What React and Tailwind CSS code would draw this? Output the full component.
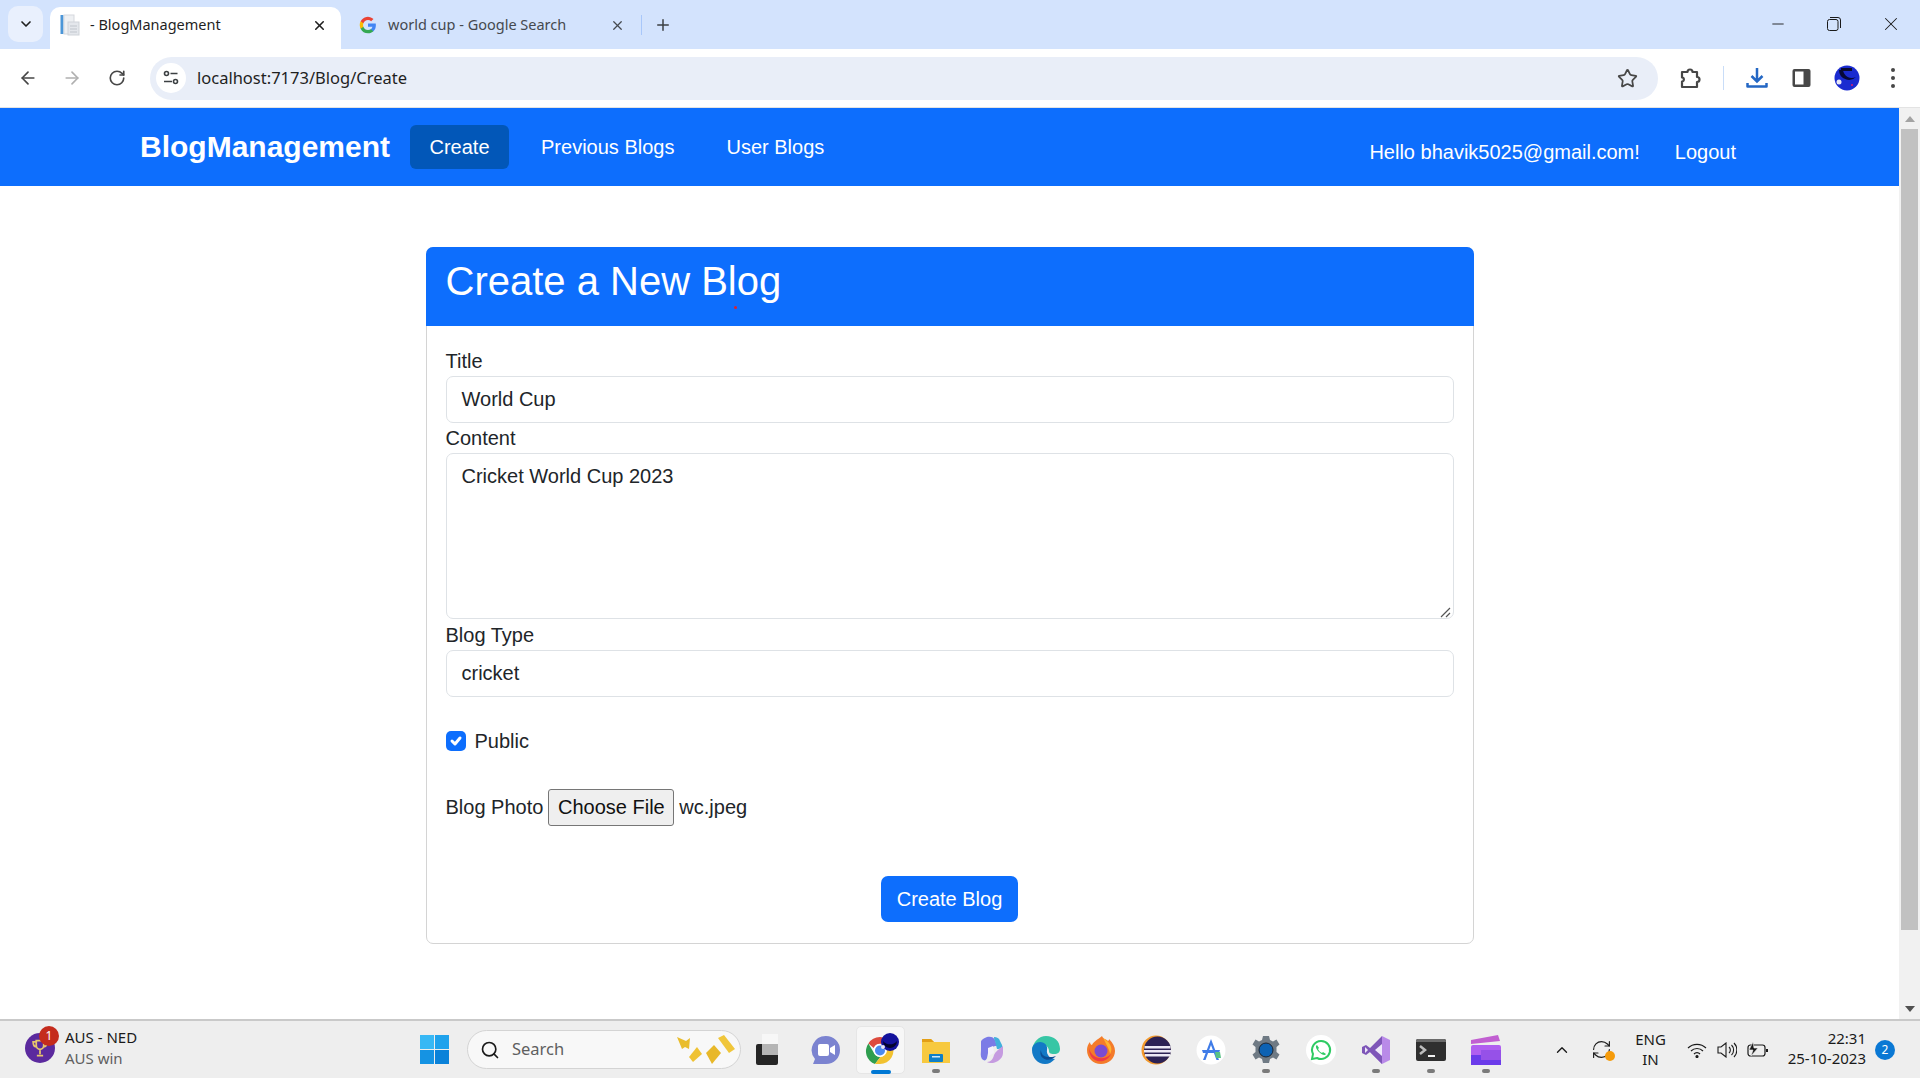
import React from "react";
import { ArrowLeft, ArrowRight, RotateCw, RefreshCw, Star, Search, ChevronDown, ChevronUp, X, Plus, Minus } from "lucide-react";

const ui = { fontFamily: '"Noto Sans", "Open Sans", sans-serif' };
const web = { fontFamily: '"Liberation Sans", Arial, sans-serif' };

function GoogleG() {
  return (
    <svg viewBox="0 0 24 24" className="w-[18px] h-[18px]">
      <path fill="#4285F4" d="M22.5 12.3c0-.8-.1-1.600-.2-2.300H12v4.400h5.900a5 5 0 0 1-2.200 3.300v2.700h3.500c2.100-1.900 3.300-4.800 3.300-8.100z" />
      <path fill="#34A853" d="M12 23c3 0 5.400-1 7.200-2.700l-3.500-2.700c-1 .7-2.200 1.100-3.700 1.100-2.900 0-5.300-1.900-6.200-4.500H2.200v2.800A11 11 0 0 0 12 23z" />
      <path fill="#FBBC05" d="M5.800 14.200a6.600 6.600 0 0 1 0-4.300V7H2.200a11 11 0 0 0 0 9.900z" />
      <path fill="#EA4335" d="M12 5.400c1.600 0 3 .6 4.200 1.600l3.100-3.100A11 11 0 0 0 2.200 7l3.600 2.800C6.700 7.300 9.100 5.400 12 5.400z" />
    </svg>
  );
}

function PageFav() {
  return (
    <svg viewBox="0 0 20 22" className="w-[20px] h-[22px]">
      <rect x="0.500" y="1" width="3" height="19" fill="#4b96d8" />
      <rect x="4" y="1" width="10" height="19" fill="#eef0f3" stroke="#d5d8dd" />
      <rect x="8" y="8" width="11" height="13" fill="#e4e7ec" stroke="#cfd3d9" />
      <path d="M10 12h7M10 15h7M10 18h7" stroke="#c0c5cc" />
    </svg>
  );
}

function Tune() {
  return (
    <svg viewBox="0 0 16 16" className="w-[16px] h-[16px]" fill="none" stroke="#3c4043" strokeWidth="1.600">
      <circle cx="3.500" cy="3.500" r="2" />
      <path d="M7.500 3.500h7M1 11.500h8" />
      <circle cx="12.500" cy="11.500" r="2" />
    </svg>
  );
}

function Puzzle() {
  return (
    <svg viewBox="0 0 24 24" className="w-[24px] h-[24px]" fill="none" stroke="#474747" strokeWidth="2.200" strokeLinejoin="round">
      <path d="M4 6h5.500a2.500 2.500 0 0 1 5 0H19v5a2.500 2.500 0 0 1 0 5v5H4v-5.500c2.500 0 2.500-4 0-4z" />
    </svg>
  );
}

function Download() {
  return (
    <svg viewBox="0 0 24 24" className="w-[24px] h-[24px]" fill="none" stroke="#2467c4" strokeWidth="2.500">
      <path d="M12 2v13M6.500 10l5.500 5.500L17.500 10" />
      <path d="M2.500 17v3.500h19V17" strokeLinejoin="round" />
    </svg>
  );
}

function SidePanel() {
  return (
    <svg viewBox="0 0 20 20" className="w-[20px] h-[20px]">
      <rect x="0.500" y="1" width="18" height="18" rx="2" fill="#474747" />
      <rect x="3" y="3.500" width="8.500" height="13" fill="#fff" />
    </svg>
  );
}

function Avatar() {
  return (
    <svg viewBox="0 0 26 26" className="w-[26px] h-[26px]">
      <circle cx="13" cy="13" r="12.500" fill="#1a2bd0" />
      <path d="M5 5a10 10 0 0 0 17 7 9 9 0 0 1-13-7z" fill="#06083a" />
      <circle cx="5" cy="17" r="2.500" fill="#e8e8f5" />
      <circle cx="18" cy="20" r="1" fill="#e01f70" />
      <path d="M7 3h11v3H7z" fill="#0a0a30" />
    </svg>
  );
}

function Restore() {
  return (
    <svg viewBox="0 0 14 14" className="w-[14px] h-[14px]" fill="none" stroke="#1a1a1a" strokeWidth="1">
      <rect x="0.500" y="2.500" width="10.500" height="11" rx="2" />
      <path d="M3 .5h8a2.500 2.500 0 0 1 2.500 2.500v8" />
    </svg>
  );
}

function TabStrip() {
  return (
    <div className="h-[49px] shrink-0 bg-[#d3e3fd] flex items-start relative" style={ui}>
      <div className="ml-[8px] mt-[6px] w-[35px] h-[36px] rounded-[10px] bg-[#e9f0fd] flex items-center justify-center">
        <ChevronDown size={16} strokeWidth={2.500} color="#1f1f1f" />
      </div>
      <div className="ml-[7px] mt-[7px] w-[291px] h-[42px] bg-white rounded-t-[10px] flex items-center pl-[10px] pr-[14px] pb-[6px]">
        <PageFav />
        <span className="ml-[10px] text-[14.500px] text-[#1f1f1f] flex-1">- BlogManagement</span>
        <X size={15} strokeWidth={2.500} color="#1f1f1f" />
      </div>
      <div className="mt-[7px] h-[42px] flex items-center ml-[18px] pb-[6px]">
        <GoogleG />
        <span className="ml-[11px] text-[14.500px] text-[#45494f] w-[222px]">world cup - Google Search</span>
        <X size={15} strokeWidth={2} color="#45494f" />
        <div className="ml-[16px] w-px h-[20px] bg-[#a8c7fa]" />
        <Plus size={18} strokeWidth={2} color="#3c4043" className="ml-[12px]" />
      </div>
      <div className="ml-auto h-[49px] flex">
        <div className="w-[56px] flex justify-center pt-[15px]">
          <Minus size={18} strokeWidth={1.200} color="#1a1a1a" />
        </div>
        <div className="w-[56px] flex justify-center pt-[17px]">
          <Restore />
        </div>
        <div className="w-[58px] flex justify-center pt-[13px]">
          <X size={22} strokeWidth={1.100} color="#1a1a1a" />
        </div>
      </div>
    </div>
  );
}

function Toolbar() {
  return (
    <div className="h-[59px] shrink-0 bg-white border-b border-[#e3e3e3] rounded-t-[8px] flex items-center relative z-10" style={ui}>
      <ArrowLeft size={20} strokeWidth={2} color="#474747" className="ml-[18px]" />
      <ArrowRight size={20} strokeWidth={2} color="#b0b0b0" className="ml-[24px]" />
      <RotateCw size={18} strokeWidth={2.200} color="#474747" className="ml-[26px]" />
      <div className="ml-[24px] w-[1508px] h-[43px] rounded-full bg-[#e9eef8] flex items-center pl-[6px]">
        <div className="w-[30px] h-[30px] rounded-full bg-white flex items-center justify-center">
          <Tune />
        </div>
        <span className="ml-[11px] text-[16.500px] text-[#1f1f1f]">localhost:7173/Blog/Create</span>
        <Star size={21} strokeWidth={2} color="#474747" className="ml-auto mr-[20px]" />
      </div>
      <div className="ml-[20px]"><Puzzle /></div>
      <div className="ml-[21px] w-px h-[24px] bg-[#c9ddf8]" />
      <div className="ml-[21px]"><Download /></div>
      <div className="ml-[23px]"><SidePanel /></div>
      <div className="ml-[22px]"><Avatar /></div>
      <div className="ml-[31px] flex flex-col gap-[4px]">
        <span className="w-[4px] h-[4px] rounded-full bg-[#474747]" />
        <span className="w-[4px] h-[4px] rounded-full bg-[#474747]" />
        <span className="w-[4px] h-[4px] rounded-full bg-[#474747]" />
      </div>
    </div>
  );
}

function Nav() {
  return (
    <nav className="h-[78px] shrink-0 bg-[#0d6efd] text-white flex items-center pl-[140px] text-[20px]">
      <span className="text-[30px] font-bold leading-none">BlogManagement</span>
      <span className="ml-[20px] w-[99px] h-[44px] rounded-[6px] bg-[#0257b8] flex items-center justify-center">Create</span>
      <span className="ml-[32px]">Previous Blogs</span>
      <span className="ml-[52px]">User Blogs</span>
      <div className="ml-auto mr-[163px] flex gap-[35px] pt-[10px]">
        <span>Hello bhavik5025@gmail.com!</span>
        <span>Logout</span>
      </div>
    </nav>
  );
}

function Field({ label, value }) {
  return (
    <>
      <div className="h-[30px] leading-[30px]">{label}</div>
      <div className="h-[47px] rounded-[7px] border border-[#dee2e6] flex items-center px-[15px] pb-[1px]">{value}</div>
    </>
  );
}

function Card() {
  return (
    <div className="w-[1048px] mx-auto mt-[61px] rounded-[7px] border border-[#d4d4d4] relative text-[20px] text-[#212529]">
      <div className="h-[79px] -mx-px -mt-px rounded-t-[7px] bg-[#0d6efd] text-white text-[40px] flex items-center px-[20px] pb-[12px]">
        Create a New Blog
      </div>
      <div className="px-[19px] pt-[20px] pb-[21px]">
        <Field label="Title" value="World Cup" />
        <div className="h-[30px] leading-[30px]">Content</div>
        <div className="h-[166px] rounded-[7px] border border-[#dee2e6] px-[15px] pt-[7px] relative">
          Cricket World Cup 2023
          <svg viewBox="0 0 12 12" className="absolute right-[2px] bottom-0 w-[12px] h-[12px]" stroke="#555" strokeWidth="1.200">
            <path d="M2 11 11 2M7 11l4-4" />
          </svg>
        </div>
        <div className="h-[31px] leading-[32px]">Blog Type</div>
        <div className="h-[47px] rounded-[7px] border border-[#dee2e6] flex items-center px-[15px] pb-[1px]">cricket</div>
        <div className="mt-[32px] h-[24px] flex items-center">
          <span className="w-[20px] h-[20px] rounded-[5px] bg-[#0d6efd] flex items-center justify-center">
            <svg viewBox="0 0 20 20" className="w-[20px] h-[20px]" fill="none" stroke="#fff" strokeWidth="3" strokeLinecap="round" strokeLinejoin="round">
              <path d="m6 10 3 3 5-6" />
            </svg>
          </span>
          <span className="ml-[9px]">Public</span>
        </div>
        <div className="mt-[36px] h-[36px] flex items-center">
          <span>Blog Photo</span>
          <span className="ml-[5px] w-[126px] h-[37px] rounded-[3px] border border-[#767676] bg-[#efefef] flex items-center justify-center text-[#111]">Choose File</span>
          <span className="ml-[5px]">wc.jpeg</span>
        </div>
        <div className="mt-[51px] flex justify-center">
          <span className="w-[137px] h-[46px] rounded-[7px] bg-[#0d6efd] text-white flex items-center justify-center">Create Blog</span>
        </div>
      </div>
      <div className="absolute left-[307px] top-[58px] w-[3px] h-[3px] rounded-full bg-[#e0202a]" />
    </div>
  );
}

function Scrollbar() {
  return (
    <div className="w-[21px] shrink-0 bg-[#f1f1f1] flex flex-col items-center">
      <div className="h-[21px] flex items-center justify-center">
        <svg viewBox="0 0 10 6" className="w-[10px] h-[6px]"><path d="M5 0l5 6H0z" fill="#a3a3a3" /></svg>
      </div>
      <div className="w-[17px] h-[801px] bg-[#c1c1c1]" />
      <div className="flex-1" />
      <div className="h-[21px] flex items-center justify-center">
        <svg viewBox="0 0 10 6" className="w-[10px] h-[6px]"><path d="M5 6 10 0H0z" fill="#505050" /></svg>
      </div>
    </div>
  );
}

function Slot({ children, active, dot }) {
  return (
    <div className="w-[55px] h-[48px] relative flex items-center justify-center shrink-0">
      {active && <span className="absolute inset-y-0 left-[3px] right-[3px] rounded-[5px] bg-[#f7f7f7] border border-[#e6e6e6]" />}
      <span className="relative flex">{children}</span>
      {dot && <span className="absolute bottom-[1px] left-1/2 -translate-x-1/2 w-[8px] h-[4px] rounded-full bg-[#7a7a7a]" />}
      {active && <span className="absolute bottom-[0px] left-1/2 -translate-x-1/2 w-[20px] h-[4px] rounded-full bg-[#0078d4]" />}
    </div>
  );
}

const Ic = ({ children, vb = "0 0 30 30", s = 30 }) => (
  <svg viewBox={vb} style={{ width: s, height: s }}>{children}</svg>
);

function Taskbar() {
  return (
    <div className="h-[59px] shrink-0 bg-[#eeeeee] border-t-2 border-[#c9c9c9] flex items-center relative" style={ui}>
      <div className="absolute left-[25px] top-[12px] w-[30px] h-[30px] rounded-full bg-[#5b2a9e] flex items-center justify-center">
        <svg viewBox="0 0 16 16" className="w-[20px] h-[20px]" fill="none" stroke="#e7c66c" strokeWidth="1.400">
          <path d="M5 2h6v4a3 3 0 0 1-6 0zM8 9v4M5.500 14h5M5 3H2.500c0 3 1 4 2.500 4M11 3h2.500c0 3-1 4-2.500 4" />
        </svg>
      </div>
      <div className="absolute left-[39px] top-[5px] w-[20px] h-[20px] rounded-full bg-[#c42b1c] text-white text-[12px] flex items-center justify-center">1</div>
      <div className="absolute left-[65px] top-[6px] text-[15px] leading-[21px] text-[#1a1a1a]">
        <div>AUS - NED</div>
        <div className="text-[#5f5f5f]">AUS win</div>
      </div>
      <div className="ml-[420px] w-[29px] h-[29px] grid grid-cols-2 grid-rows-2 gap-[1px]">
        <span className="bg-[#37b8f5]" />
        <span className="bg-[#1fa2ec]" />
        <span className="bg-[#1593e3]" />
        <span className="bg-[#0a82d9]" />
      </div>
      <div className="ml-[18px] w-[274px] h-[39px] rounded-full bg-[#f8f8f8] border border-[#d4d4d4] flex items-center pl-[12px] relative">
        <Search size={20} strokeWidth={2} color="#1a1a1a" />
        <span className="ml-[12px] text-[16.500px] text-[#5f5f5f]">Search</span>
        <svg viewBox="0 0 60 30" className="absolute right-[4px] top-[4px] w-[60px] h-[30px]">
          <path d="M1 2l9 4 4-3-1 11-4-2-3 2z" fill="#e9bd2d" />
          <path d="M42 3l6-3 11 14-6 4z" fill="#f0c63a" />
          <path d="M30 18l8-8 7 8-9 11z" fill="#e8b829" />
          <path d="M13 22l8-10 5 7-9 8z" fill="#efc233" />
        </svg>
      </div>
      <div className="ml-[15px] w-[22px] h-[31px] relative shrink-0">
        <span className="absolute left-[0px] bottom-0 w-[22px] h-[21px] bg-[#252525] rounded-[2px]" />
        <span className="absolute left-[6px] top-0 w-[16px] h-[21px] bg-[#f7f7f7]" />
        <span className="absolute left-[6px] top-[10px] w-[16px] h-[11px] bg-[#b5b5b5]" />
      </div>
      <div className="ml-[20px] flex items-center">
        <Slot>
          <Ic>
            <path d="M15 1a14 14 0 0 1 14 14c0 8-6 14-14 14H2l2-5a14 14 0 0 1 11-23z" fill="#7b83d0" />
            <rect x="7" y="9" width="11" height="12" rx="2" fill="#fff" />
            <path d="M19 13l5-3v10l-5-3z" fill="#fff" />
          </Ic>
        </Slot>
        <Slot active>
          <svg viewBox="0 0 36 34" style={{ width: 36, height: 34 }}>
            <path d="M17 4a13.500 13.500 0 0 1 11.700 6.800H17a6.700 6.700 0 0 0-6.200 4.200L5.400 10.500A13.500 13.500 0 0 1 17 4z" fill="#dd4b3e" />
            <path d="M5.400 10.500 11 20a6.700 6.700 0 0 0 6.500 3.700L12 31A13.500 13.500 0 0 1 5.400 10.500z" fill="#2f9e4f" />
            <path d="M28.700 10.800A13.500 13.500 0 0 1 17 31h-5l5.500-7.300a6.700 6.700 0 0 0 5.300-10.500z" fill="#f2c230" />
            <circle cx="17" cy="17.500" r="6.500" fill="#fff" />
            <circle cx="17" cy="17.500" r="5" fill="#4a8af0" />
            <circle cx="27" cy="9" r="9" fill="#13129c" />
            <path d="M20 8a7 7 0 0 0 14 0 9 9 0 0 1-14 0z" fill="#04042e" />
            <circle cx="20" cy="14" r="2" fill="#e8e8f5" />
          </svg>
        </Slot>
        <Slot dot>
          <Ic>
            <path d="M1 4h9l3 3h16v21H1z" fill="#f7c93f" />
            <path d="M1 4h9l3 3H1z" fill="#e39f16" />
            <rect x="8" y="19" width="14" height="8" rx="1" fill="#0f7fc7" />
            <rect x="11" y="21" width="8" height="1.500" fill="#cde7f8" />
          </Ic>
        </Slot>
        <Slot>
          <Ic>
            <path d="M11 2c3-1 7 0 8 3l2 6c-5 0-8 2-9 7l-1 5c-1 3-3 3-5 1-2-3-1-6-1-9V7c0-2 3-4 6-5z" fill="#7b7be6" />
            <path d="M18 2c3 0 5 1 6 4l2 4c1 3-1 4-5 4l-2-8c-1-2-1-3-1-4z" fill="#42b0dc" />
            <path d="M27 11v7c0 3-2 6-5 8-3 2-8 3-11 1 4 0 6-3 7-7 1-3 5-6 9-9z" fill="#c59be0" />
            <path d="M12 13l5-2 1 7-6 3z" fill="#f4f1fb" />
          </Ic>
        </Slot>
        <Slot>
          <Ic>
            <path d="M15 1c8 0 14 5 14 13 0 3-2 5-6 5-4 0-5-1-5-3 0-4-4-7-8-7-4 0-8 3-9 6 1-8 7-14 14-14z" fill="#37c6a5" />
            <path d="M1 15c0-5 4-8 8-8 5 0 8 4 7 8-1 5 4 9 8 9-3 3-6 5-10 5C7 29 1 23 1 15z" fill="#1379c6" />
            <path d="M10 15c0 3 2 7 7 7 3 0 6 0 8-1-3 4-10 5-13 2-3-2-3-6-2-8z" fill="#0c4e95" />
          </Ic>
        </Slot>
        <Slot>
          <Ic>
            <path d="M16 1c1 3 4 3 6 5 1-1 1-1 1-2 4 4 6 8 6 12 0 7-6 13-14 13S1 23 1 15c0-3 1-6 3-8 0 2 1 3 2 3 1-3 5-5 10-9z" fill="#f47b2a" />
            <path d="M16 1c1 3 5 4 7 7 3 4 3 8 1 11-1-6-4-10-8-18z" fill="#ffb52e" />
            <circle cx="15" cy="16" r="6.500" fill="#7b4bd1" />
            <path d="M3 13c2 10 14 14 22 6-3 7-11 9-16 6-4-2-6-7-6-12z" fill="#ef3b46" />
          </Ic>
        </Slot>
        <Slot>
          <Ic>
            <circle cx="15" cy="15" r="14.500" fill="#f39a2d" />
            <circle cx="16.500" cy="15" r="13.500" fill="#2c2255" />
            <path d="M3.500 11h26v2.500h-26zM3 15h27v2.500H3zM4 19h25v2.500H4z" fill="#ece9f5" />
          </Ic>
        </Slot>
        <Slot>
          <Ic>
            <circle cx="15" cy="15" r="14.500" fill="#fff" />
            <path d="M15 4l8 21h-2.500L15 10 9.500 25H7z" fill="#3f7ce8" />
            <path d="M6 15h18l-1 3H7z" fill="#3f7ce8" />
            <path d="M19 17h5l1 6h-5z" fill="#58c184" />
          </Ic>
        </Slot>
        <Slot dot>
          <Ic>
            <path d="M12 1h6l1 4 3 1.500 3.500-2 3 5-3 2.500v5l3 2.500-3 5-3.500-2-3 1.500-1 4h-6l-1-4-3-1.500-3.500 2-3-5 3-2.500v-5l-3-2.500 3-5 3.500 2 3-1.500z" fill="#6f7a84" />
            <circle cx="15" cy="15" r="7" fill="#0d62b3" stroke="#1d2430" strokeWidth="1" />
          </Ic>
        </Slot>
        <Slot>
          <Ic>
            <circle cx="15" cy="15" r="15" fill="#fff" />
            <path d="M15 6a9 9 0 0 0-8 13l-1 5 5-1a9 9 0 1 0 4-17z" fill="none" stroke="#2ecb63" strokeWidth="2" />
            <path d="M11 10c-2 1-1 4 2 7s6 4 7 2l-3-2-1 1c-2-1-3-2-4-4l1-1z" fill="#2ecb63" />
          </Ic>
        </Slot>
        <Slot dot>
          <Ic>
            <path d="M21 1l8 4v20l-8 4-13-13 13-9z" fill="#b98ae8" />
            <path d="M21 1v28L9 17l-4 3-4-2V12l4-2 4 3z" fill="#7e56b8" />
            <path d="M21 9v12l-7-6z" fill="#eee8fa" />
            <path d="M4 12v6l3-3z" fill="#eee8fa" />
          </Ic>
        </Slot>
        <Slot dot>
          <Ic>
            <rect x="0" y="4" width="30" height="22" rx="2" fill="#2f2f2f" />
            <path d="M0 6a2 2 0 0 1 2-2h26a2 2 0 0 1 2 2v1H0z" fill="#6a6a6a" />
            <path d="M4 11l5 4-5 4" fill="none" stroke="#bdbdbd" strokeWidth="2.500" />
            <path d="M12 21h7" stroke="#f1f1f1" strokeWidth="2" />
          </Ic>
        </Slot>
        <Slot dot>
          <Ic>
            <path d="M0 5l27-5 2 6-29 3z" fill="#c15fd1" />
            <rect x="0" y="10" width="30" height="20" rx="2" fill="#b05ff0" />
            <rect x="0" y="20" width="30" height="10" fill="#6b3bea" />
            <rect x="10" y="15" width="20" height="10" fill="#9651e8" />
          </Ic>
        </Slot>
      </div>
      <div className="ml-auto flex items-center h-full text-[#1a1a1a]">
        <ChevronUp size={18} strokeWidth={1.800} color="#1a1a1a" />
        <div className="ml-[20px] w-[22px] h-[22px] relative">
          <RefreshCw size={21} strokeWidth={1.300} color="#1a1a1a" />
          <span className="absolute right-[-2px] bottom-[0px] w-[10px] h-[10px] rounded-full bg-[#f59b0b]" />
        </div>
        <div className="ml-[19px] w-[37px] text-center text-[15px] leading-[20px] pb-[2px]">
          <div>ENG</div>
          <div>IN</div>
        </div>
        <svg viewBox="0 0 20 16" className="ml-[18px] w-[20px] h-[16px]" fill="none" stroke="#1a1a1a" strokeWidth="1.200">
          <path d="M1 6a13 13 0 0 1 18 0M4 9a8.500 8.500 0 0 1 12 0M7 12a4 4 0 0 1 6 0" />
          <circle cx="10" cy="14.500" r="1" fill="#1a1a1a" />
        </svg>
        <svg viewBox="0 0 20 16" className="ml-[10px] w-[20px] h-[16px]" fill="none" stroke="#1a1a1a" strokeWidth="1.100">
          <path d="M1 5h3l5-4v14l-5-4H1zM12 5a4 4 0 0 1 0 6M14.500 3a7 7 0 0 1 0 10M17 1a10 10 0 0 1 0 14" />
        </svg>
        <svg viewBox="0 0 22 16" className="ml-[10px] w-[22px] h-[16px]" fill="none" stroke="#1a1a1a" strokeWidth="1.200">
          <rect x="1" y="3" width="17" height="11" rx="2.500" />
          <path d="M20 7v3" strokeWidth="2" />
          <path d="M6 0 2 8h4l-2 6 7-8H7z" fill="#1a1a1a" stroke="#eee" strokeWidth="0.600" />
        </svg>
        <div className="ml-[13px] w-[84px] text-right text-[15px] leading-[20px] pb-[4px]">
          <div>22:31</div>
          <div className="whitespace-nowrap">25-10-2023</div>
        </div>
        <div className="ml-[9px] mr-[25px] w-[20px] h-[20px] rounded-full bg-[#0a78d4] text-white text-[12px] flex items-center justify-center">2</div>
      </div>
    </div>
  );
}

export default function App() {
  return (
    <div className="h-screen w-full flex flex-col overflow-hidden bg-white" style={web}>
      <TabStrip />
      <Toolbar />
      <div className="flex flex-1 min-h-0">
        <div className="flex-1 min-w-0 flex flex-col">
          <Nav />
          <Card />
        </div>
        <Scrollbar />
      </div>
      <Taskbar />
    </div>
  );
}
